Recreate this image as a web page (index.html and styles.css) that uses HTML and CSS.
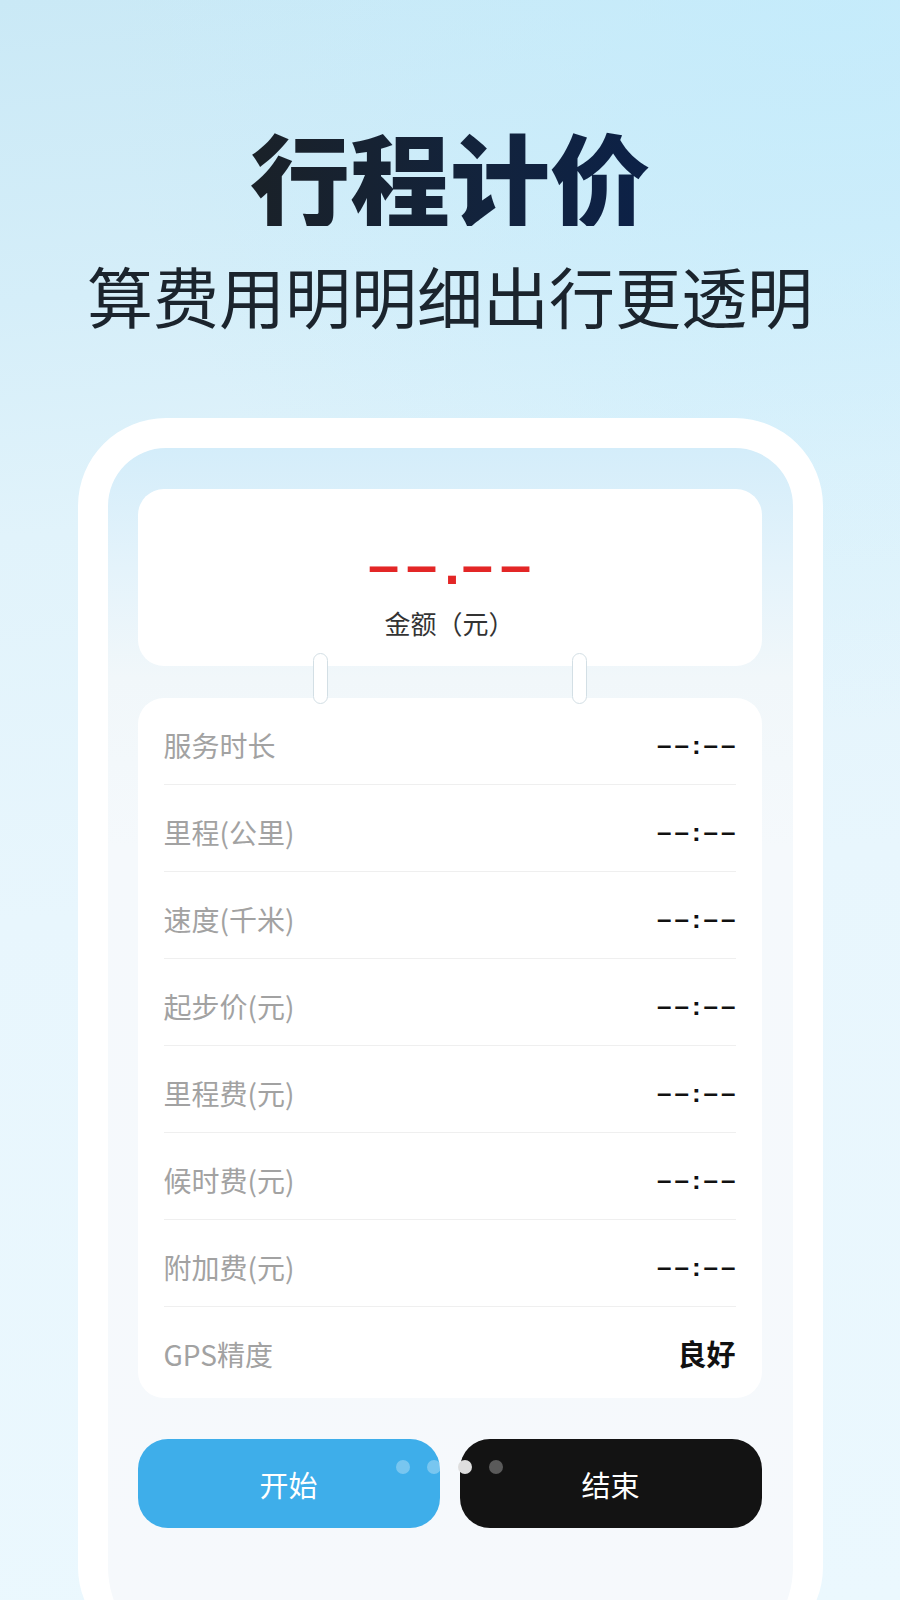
FILE: index.html
```html
<!DOCTYPE html>
<html lang="zh-CN">
<head>
    <meta charset="UTF-8">
    <meta name="viewport" content="width=device-width, initial-scale=1.0">
    <title>行程计价</title>
    <link rel="stylesheet" href="styles.css">
</head>
<body>
    <div class="page">
        <header class="hero">
            <h1 class="title">行程计价</h1>
            <p class="subtitle">算费用明明细出行更透明</p>
        </header>

        <div class="phone">
            <div class="screen">
                <div class="ticket">
                    <div class="amount-card">
                        <div class="amount">––<span class="point">.</span>––</div>
                        <div class="amount-label">金额（元）</div>
                    </div>

                    <span class="pin pin-left"></span>
                    <span class="pin pin-right"></span>

                    <ul class="detail-list">
                        <li class="detail-row"><span class="label">服务时长</span><span class="value">––:––</span></li>
                        <li class="detail-row"><span class="label">里程(公里)</span><span class="value">––:––</span></li>
                        <li class="detail-row"><span class="label">速度(千米)</span><span class="value">––:––</span></li>
                        <li class="detail-row"><span class="label">起步价(元)</span><span class="value">––:––</span></li>
                        <li class="detail-row"><span class="label">里程费(元)</span><span class="value">––:––</span></li>
                        <li class="detail-row"><span class="label">候时费(元)</span><span class="value">––:––</span></li>
                        <li class="detail-row"><span class="label">附加费(元)</span><span class="value">––:––</span></li>
                        <li class="detail-row"><span class="label">GPS精度</span><span class="value value-text">良好</span></li>
                    </ul>
                </div>

                <div class="actions">
                    <button type="button" class="btn btn-start">开始</button>
                    <button type="button" class="btn btn-end">结束</button>
                    <div class="dots">
                        <i></i><i></i><i class="on"></i><i></i>
                    </div>
                </div>
            </div>
        </div>
    </div>
</body>
</html>
```

FILE: styles.css
```css
:root {
    --cjk: "Noto Sans CJK SC", "Noto Sans", sans-serif;
    --latin: "Liberation Sans", Arial, sans-serif;
    --red: #e32626;
    --blue: #3eaeea;
    --ink: #131313;
    --muted: #a2a2a2;
    --line: #efefef;
    --white: #fff;
}

* {
    margin: 0;
    padding: 0;
    box-sizing: border-box;
}

body {
    font-family: var(--cjk);
    background: #e6f5fc;
}

.page {
    height: 1600px;
    overflow: hidden;
    background:
        radial-gradient(circle at 92% 0%, rgba(194, 236, 253, 0.7), rgba(194, 236, 253, 0) 40%),
        linear-gradient(175deg, #cae9f6 0%, #d5eef9 18%, #e1f3fb 32%, #e8f6fd 55%, #ebf8fe 100%);
}

/* Header */
.hero {
    display: flex;
    flex-direction: column;
    align-items: center;
    padding-top: 126px;
}

.title {
    font-size: 100px;
    line-height: 100px;
    font-weight: 900;
    background: linear-gradient(90deg, #1a2128 0%, #12233d 60%, #0c2147 100%);
    -webkit-background-clip: text;
    background-clip: text;
    color: transparent;
}

.subtitle {
    margin-top: 35px;
    font-size: 66px;
    line-height: 66px;
    font-weight: 400;
    color: #1b242d;
}

/* Phone mockup */
.phone {
    width: 745px;
    height: 1237px;
    margin: 91px auto 0;
    border: 30px solid var(--white);
    border-bottom-width: 12px;
    border-radius: 88px;
    background: linear-gradient(180deg, #d4edfa 0px, #e4f3fb 120px, #f1f7fa 230px, #f5f9fc 400px, #f6f9fc 100%);
}

.screen {
    padding: 41px 31px 0 30px;
}

.ticket {
    position: relative;
}

.amount-card {
    height: 177px;
    padding-top: 48px;
    display: flex;
    flex-direction: column;
    align-items: center;
    background: var(--white);
    border-radius: 26px;
}

.amount {
    font-family: var(--latin);
    font-size: 56px;
    line-height: 56px;
    font-weight: 700;
    color: var(--red);
    letter-spacing: 7px;
    padding-left: 7px;
}

.amount .point {
    letter-spacing: 2px;
}

.amount-label {
    margin-top: 17px;
    font-size: 26px;
    line-height: 26px;
    color: #333;
}

.pin {
    position: absolute;
    top: 164px;
    width: 15px;
    height: 51px;
    background: var(--white);
    border: 1.5px solid #d3dfe5;
    border-radius: 8px;
}

.pin-left {
    left: 175px;
}

.pin-right {
    left: 434px;
}

/* Trip details */
.detail-list {
    list-style: none;
    margin-top: 32px;
    padding: 0 26px 5px;
    background: var(--white);
    border-radius: 26px;
}

.detail-row {
    display: flex;
    justify-content: space-between;
    align-items: center;
    height: 87px;
    padding-top: 7px;
    border-bottom: 1px solid var(--line);
}

.detail-row:last-child {
    height: 86px;
    border-bottom: none;
}

.label {
    font-size: 28px;
    line-height: 28px;
    color: var(--muted);
}

.value {
    font-family: var(--latin);
    font-size: 26px;
    line-height: 26px;
    font-weight: 700;
    color: #111;
    letter-spacing: 3px;
    margin-right: -3px;
}

.value-text {
    font-family: var(--cjk);
    font-size: 29px;
    line-height: 29px;
    letter-spacing: 0;
    margin-right: 0;
}

/* Buttons */
.actions {
    position: relative;
    display: flex;
    gap: 20px;
    margin-top: 41px;
}

.btn {
    flex: 1;
    height: 89px;
    border: none;
    border-radius: 30px;
    font-family: var(--cjk);
    font-size: 29px;
    color: var(--white);
    cursor: pointer;
}

.btn-start {
    background: var(--blue);
}

.btn-end {
    background: var(--ink);
}

.dots {
    position: absolute;
    top: 21px;
    left: 258px;
    display: flex;
    gap: 17px;
}

.dots i {
    width: 14px;
    height: 14px;
    border-radius: 50%;
    background: rgba(255, 255, 255, 0.3);
}

.dots i.on {
    background: #dedede;
}
```
